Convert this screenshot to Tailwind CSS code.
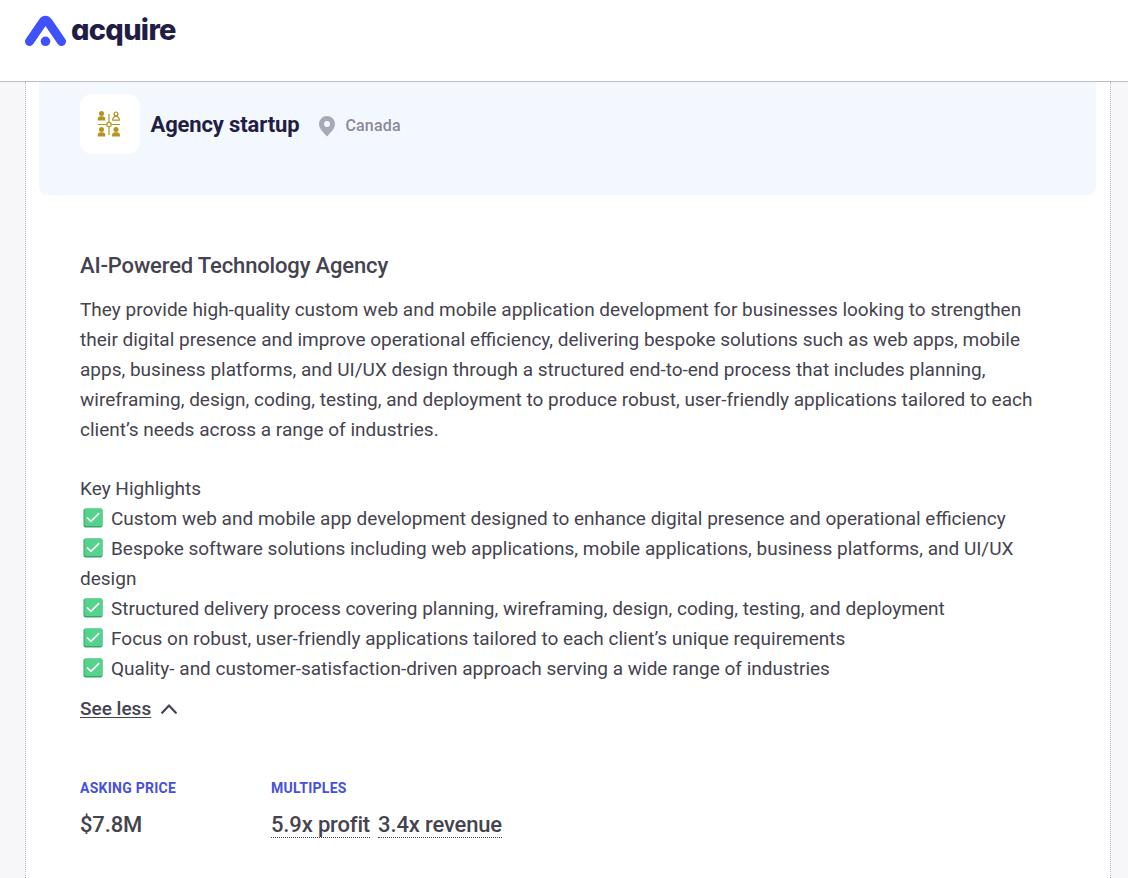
<!DOCTYPE html>
<html lang="en">
<head>
  <meta charset="UTF-8" />
  <meta name="viewport" content="width=device-width, initial-scale=1" />
  <title>Acquire - Agency startup</title>
  <script src="https://cdn.jsdelivr.net/npm/@tailwindcss/browser@4"></script>
</head>
<body class="bg-[#f7f7f9] font-['Roboto',sans-serif] text-[#45434f] h-screen overflow-hidden flex flex-col">
  <svg class="hidden">
    <symbol id="check" viewBox="0 0 20 20">
      <rect x="0.500" y="0.500" width="19" height="19" rx="2" fill="#38a56a" />
      <rect x="1.500" y="0.500" width="18" height="17.500" rx="1.500" fill="#55d38c" />
      <path d="M4 9.500l3.900 3.900 8.300-8.300" fill="none" stroke="#fff" stroke-width="1.600" />
    </symbol>
    <symbol id="person" viewBox="0 0 8 10">
      <circle cx="4" cy="2.600" r="2.500" />
      <path d="M0 9.600V8.200c0-1.700 1.200-2.500 2.600-2.900h2.800C6.800 5.700 8 6.500 8 8.200v1.400z" />
    </symbol>
  </svg>

  <header class="h-[82px] shrink-0 bg-white border-b border-[#bcbcc0] pl-[25px] pt-[15px] flex items-start">
    <svg class="shrink-0" width="41" height="32" viewBox="0 0 41 32">
      <path d="M4.500 26.500L17.500 7.500Q20.500 3 23.500 7.500L36.500 26.500" fill="none" stroke="#3f51fa" stroke-width="9" stroke-linecap="round" stroke-linejoin="round" />
      <circle cx="20.500" cy="26.300" r="4.800" fill="#3f51fa" />
    </svg>
    <span class="ml-[5px] -mt-px font-['Inter',sans-serif] font-extrabold text-[29px] leading-8 tracking-[-0.7px] text-[#221d44] [font-feature-settings:'cv11']">acquire</span>
  </header>

  <main class="flex-1 mx-[25px] w-[1086px] bg-white border-x border-dotted border-[#bcbcc0] px-[13px]">
    <div class="w-[1057px] h-[113px] bg-[#f3f7fe] rounded-b-lg pl-[41px] pt-3 flex items-start">
      <div class="size-[60px] bg-white rounded-xl flex items-center justify-center">
        <svg class="mr-0.5" width="24" height="26" viewBox="0 0 24 26" fill="#b8931c">
          <use href="#person" x="0.500" y="0" width="8" height="10" />
          <g fill="none" stroke="#b8931c" stroke-width="1.200">
            <circle cx="19" cy="2.900" r="1.900" />
            <path d="M15.700 9.100V8c0-1.400 1-2 2.400-2.600h1.800c1.400.6 2.400 1.200 2.400 2.600v1.100z" />
            <path d="M1 13.500h8.500M14.500 13.500H23M12 3v8M12 16V24" />
            <circle cx="12" cy="13.500" r="2.200" />
          </g>
          <use href="#person" x="0.500" y="16" width="8" height="10" />
          <use href="#person" x="15" y="16" width="8" height="10" />
        </svg>
      </div>
      <div class="h-[60px] flex items-center ml-[10.5px]">
        <h1 class="text-[22px] font-bold tracking-[-0.14px] text-[#221d44]">Agency startup</h1>
        <svg class="ml-5 mt-1" width="16" height="21" viewBox="0 0 16 21">
          <path fill="#a9a8b9" fill-rule="evenodd" d="M8 0a8 8 0 0 0-8 8c0 5 5 9 8 12.500C11 17 16 13 16 8a8 8 0 0 0-8-8zm0 5a3 3 0 1 1 0 6 3 3 0 0 1 0-6z" />
        </svg>
        <span class="ml-[10px] mt-[3px] text-[16px] font-medium text-[#8b8999] tracking-[0.2px]">Canada</span>
      </div>
    </div>

    <section class="pl-[41px] pt-14 w-[1010px]">
      <h2 class="text-[22px] leading-[30px] font-medium tracking-[-0.15px]">AI-Powered Technology Agency</h2>
      <p class="mt-[14px] text-[19px] leading-[30px]">They provide high-quality custom web and mobile application development for businesses looking to strengthen their digital presence and improve operational efficiency, delivering bespoke solutions such as web apps, mobile apps, business platforms, and UI/UX design through a structured end-to-end process that includes planning, wireframing, design, coding, testing, and deployment to produce robust, user-friendly applications tailored to each client’s needs across a range of industries.</p>
      <p class="mt-[29px] text-[19px] leading-[30px]">Key Highlights</p>
      <ul class="text-[19px] leading-[30px]">
        <li><svg class="inline-block align-[-3px] ml-[3px] mr-2" width="20" height="20"><use href="#check" /></svg>Custom web and mobile app development designed to enhance digital presence and operational efficiency</li>
        <li><svg class="inline-block align-[-3px] ml-[3px] mr-2" width="20" height="20"><use href="#check" /></svg>Bespoke software solutions including web applications, mobile applications, business platforms, and UI/UX design</li>
        <li><svg class="inline-block align-[-3px] ml-[3px] mr-2" width="20" height="20"><use href="#check" /></svg>Structured delivery process covering planning, wireframing, design, coding, testing, and deployment</li>
        <li><svg class="inline-block align-[-3px] ml-[3px] mr-2" width="20" height="20"><use href="#check" /></svg>Focus on robust, user-friendly applications tailored to each client’s unique requirements</li>
        <li><svg class="inline-block align-[-3px] ml-[3px] mr-2" width="20" height="20"><use href="#check" /></svg>Quality- and customer-satisfaction-driven approach serving a wide range of industries</li>
      </ul>
      <button class="mt-[10px] flex items-center text-[19px] leading-[30px] font-medium">
        <span class="underline underline-offset-2 decoration-1">See less</span>
        <svg class="ml-[10px]" width="16" height="10" viewBox="0 0 16 10" fill="none" stroke="#45434f" stroke-width="2.200" stroke-linecap="round" stroke-linejoin="round">
          <path d="M1.200 8.800L8 1.500l6.800 7.300" />
        </svg>
      </button>

      <dl class="mt-[54px] flex">
        <div class="w-[191px]">
          <dt class="text-sm leading-5 font-bold tracking-[0.26px] text-[#4550e0]">ASKING PRICE</dt>
          <dd class="mt-[14px] text-[22px] leading-[26px] font-medium tracking-[-0.15px]">$7.8M</dd>
        </div>
        <div>
          <dt class="text-sm leading-5 font-bold tracking-[0.26px] text-[#4550e0]">MULTIPLES</dt>
          <dd class="mt-[14px] flex gap-2 text-[22px] leading-[25px] font-medium tracking-[-0.15px]">
            <span class="border-b border-dotted border-[#45434f]">5.9x profit</span>
            <span class="border-b border-dotted border-[#45434f]">3.4x revenue</span>
          </dd>
        </div>
      </dl>
    </section>
  </main>
</body>
</html>
